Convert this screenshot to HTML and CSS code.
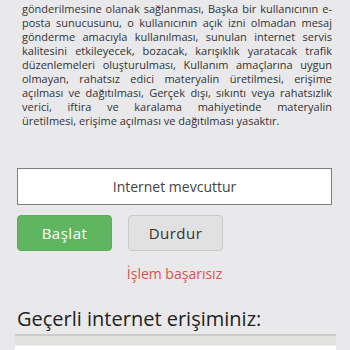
FILE: index.html
```html
<!DOCTYPE html>
<html lang="tr">
<head>
<meta charset="utf-8">
<link rel="stylesheet" href="styles.css">
</head>
<body>
<div class="wrap">
  <p class="terms">
    <span class="ln">gönderilmesine olanak sağlanması, Başka bir kullanıcının e-</span>
    <span class="ln">posta sunucusunu, o kullanıcının açık izni olmadan mesaj</span>
    <span class="ln">gönderme amacıyla kullanılması, sunulan internet servis</span>
    <span class="ln">kalitesini etkileyecek, bozacak, karışıklık yaratacak trafik</span>
    <span class="ln">düzenlemeleri oluşturulması, Kullanım amaçlarına uygun</span>
    <span class="ln">olmayan, rahatsız edici materyalin üretilmesi, erişime</span>
    <span class="ln">açılması ve dağıtılması, Gerçek dışı, sıkıntı veya rahatsızlık</span>
    <span class="ln">verici, iftira ve karalama mahiyetinde materyalin</span>
    <span class="ln last">üretilmesi, erişime açılması ve dağıtılması yasaktır.</span>
  </p>
  <div class="status">Internet mevcuttur</div>
  <div class="actions">
    <button class="btn btn-start">Başlat</button>
    <button class="btn btn-stop">Durdur</button>
  </div>
  <div class="error">İşlem başarısız</div>
  <h2 class="title">Geçerli internet erişiminiz:</h2>
</div>
<div class="result">
  <div class="result-head"></div>
  <div class="result-body"></div>
</div>
</body>
</html>
```
FILE: styles.css
```css
html, body {
  margin: 0;
  padding: 0;
}
body {
  background: #e9e9eb;
  font-family: "Open Sans", "Noto Sans", sans-serif;
  color: #333;
  overflow: hidden;
}
.wrap {
  padding: 0 18px 0 17px;
}
.terms {
  margin: 0;
  padding: 2px 0 0 5px;
  font-size: 11px;
  line-height: 14px;
  color: #333;
}
.ln {
  display: block;
  white-space: nowrap;
  text-align: justify;
  text-align-last: justify;
}
.ln.last {
  text-align-last: left;
}
.status {
  margin-top: 40px;
  height: 37px;
  box-sizing: border-box;
  border: 1px solid #7d7d7d;
  background: #fff;
  display: flex;
  align-items: center;
  justify-content: center;
  font-size: 14px;
  color: #444;
}
.actions {
  display: flex;
  gap: 16px;
  margin-top: 10px;
}
.btn {
  width: 95px;
  height: 36px;
  box-sizing: border-box;
  border-radius: 4px;
  font-family: "Open Sans", "Noto Sans", sans-serif;
  font-size: 15px;
  letter-spacing: 0.5px;
  padding: 0;
}
.btn-start {
  background: #60b660;
  border: 1px solid #5aae5a;
  color: #fff;
}
.btn-stop {
  background: #e1e1e1;
  border: 1px solid #c9c9c9;
  color: #333;
}
.error {
  margin-top: 13px;
  text-align: center;
  font-size: 14px;
  line-height: 20px;
  color: #d9534f;
}
.title {
  margin: 21px 0 0 0;
  font-size: 20px;
  line-height: 28px;
  font-weight: normal;
  color: #222;
}
.result {
  margin: 1px 14px 0 15px;
  border-top: 2px solid #cbcbcb;
}
.result-head {
  height: 9px;
  background: #e2e3e0;
  border-bottom: 1px solid #ececea;
}
.result-body {
  height: 20px;
  background: #fff;
}
```
